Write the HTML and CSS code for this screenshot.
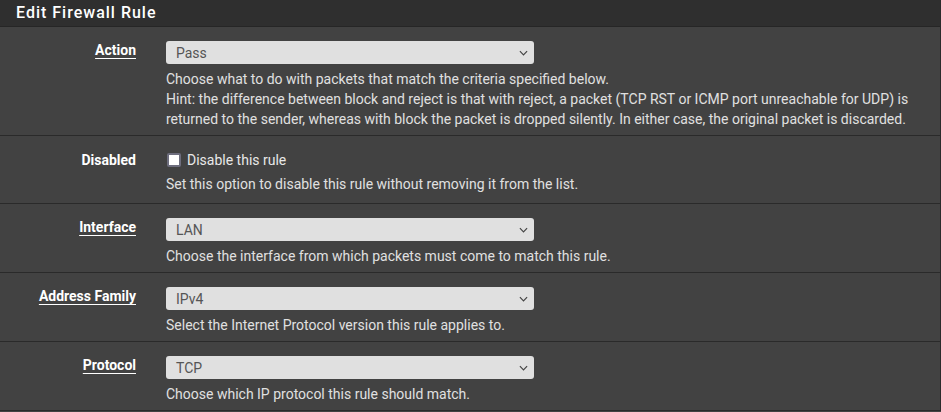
FILE: index.html
```html
<!DOCTYPE html>
<html>
<head>
<meta charset="utf-8">
<link rel="stylesheet" href="styles.css">
</head>
<body>
<div class="panel">
  <div class="panel-heading"><h2 class="panel-title">Edit Firewall Rule</h2></div>
  <div class="panel-body">
    <div class="form-row">
      <div class="label-col"><span class="lbl req">Action</span></div>
      <div class="input-col">
        <div class="select"><span>Pass</span><svg class="chev" viewBox="0 0 10 6" width="9" height="6"><path d="M1 1 L5 5 L9 1" fill="none" stroke="#444" stroke-width="1.3"/></svg></div>
        <div class="help">Choose what to do with packets that match the criteria specified below.<br>Hint: the difference between block and reject is that with reject, a packet (TCP RST or ICMP port unreachable for UDP) is returned to the sender, whereas with block the packet is dropped silently. In either case, the original packet is discarded.</div>
      </div>
    </div>
    <div class="form-row row-check">
      <div class="label-col"><span class="lbl">Disabled</span></div>
      <div class="input-col">
        <label class="check"><span class="box"></span>Disable this rule</label>
        <div class="help">Set this option to disable this rule without removing it from the list.</div>
      </div>
    </div>
    <div class="form-row">
      <div class="label-col"><span class="lbl req">Interface</span></div>
      <div class="input-col">
        <div class="select"><span>LAN</span><svg class="chev" viewBox="0 0 10 6" width="9" height="6"><path d="M1 1 L5 5 L9 1" fill="none" stroke="#444" stroke-width="1.3"/></svg></div>
        <div class="help">Choose the interface from which packets must come to match this rule.</div>
      </div>
    </div>
    <div class="form-row">
      <div class="label-col"><span class="lbl req">Address Family</span></div>
      <div class="input-col">
        <div class="select"><span>IPv4</span><svg class="chev" viewBox="0 0 10 6" width="9" height="6"><path d="M1 1 L5 5 L9 1" fill="none" stroke="#444" stroke-width="1.3"/></svg></div>
        <div class="help">Select the Internet Protocol version this rule applies to.</div>
      </div>
    </div>
    <div class="form-row">
      <div class="label-col"><span class="lbl req">Protocol</span></div>
      <div class="input-col">
        <div class="select"><span>TCP</span><svg class="chev" viewBox="0 0 10 6" width="9" height="6"><path d="M1 1 L5 5 L9 1" fill="none" stroke="#444" stroke-width="1.3"/></svg></div>
        <div class="help">Choose which IP protocol this rule should match.</div>
      </div>
    </div>
  </div>
</div>
</body>
</html>
```
FILE: styles.css
```css
html, body {
  margin: 0;
  padding: 0;
  background: #424242;
  font-family: Roboto, "Liberation Sans", sans-serif;
  font-size: 14px;
  color: #e0e0e0;
}
.panel {
  width: 940px;
  background: #424242;
  border-right: 1px solid #2b2b2b;
}
.panel-heading {
  background: #2f2f2f;
  border-bottom: 1px solid #262626;
  height: 26px;
  display: flex;
  align-items: center;
  padding-left: 16px;
}
.panel-title {
  margin: 0 0 1px;
  font-size: 16px;
  font-weight: 500;
  color: #ffffff;
  letter-spacing: 1px;
}
.form-row {
  display: grid;
  grid-template-columns: 151px 1fr;
  border-bottom: 1px solid #2a2a2a;
  padding: 14px 0 6px;
}
.label-col {
  text-align: right;
  padding-right: 15px;
}
.lbl {
  display: inline-block;
  font-weight: 700;
  color: #ffffff;
  line-height: 18px;
}
.lbl.req {
  text-decoration: underline;
  text-underline-offset: 3px;
}
.input-col {
  padding-left: 15px;
  padding-right: 15px;
}
.select {
  width: 368px;
  height: 23px;
  box-sizing: border-box;
  background: #e0e0e0;
  border-radius: 3px;
  display: flex;
  align-items: center;
  justify-content: space-between;
  padding: 0 6px 0 10px;
  color: #555555;
}
.chev {
  display: block;
}
.help {
  margin-top: 5px;
  line-height: 20px;
  color: #e0e0e0;
}
.row-check {
  padding-bottom: 9px;
}
.row-check .lbl {
  line-height: 20px;
}
.row-check .help {
  margin-top: 4px;
}
.check {
  display: flex;
  align-items: center;
  line-height: 20px;
  color: #e8e8e8;
}
.box {
  width: 10px;
  height: 10px;
  background: #ffffff;
  border: 2px solid #6e6e7e;
  border-radius: 2px;
  margin: 0 6px 0 1px;
}
```
